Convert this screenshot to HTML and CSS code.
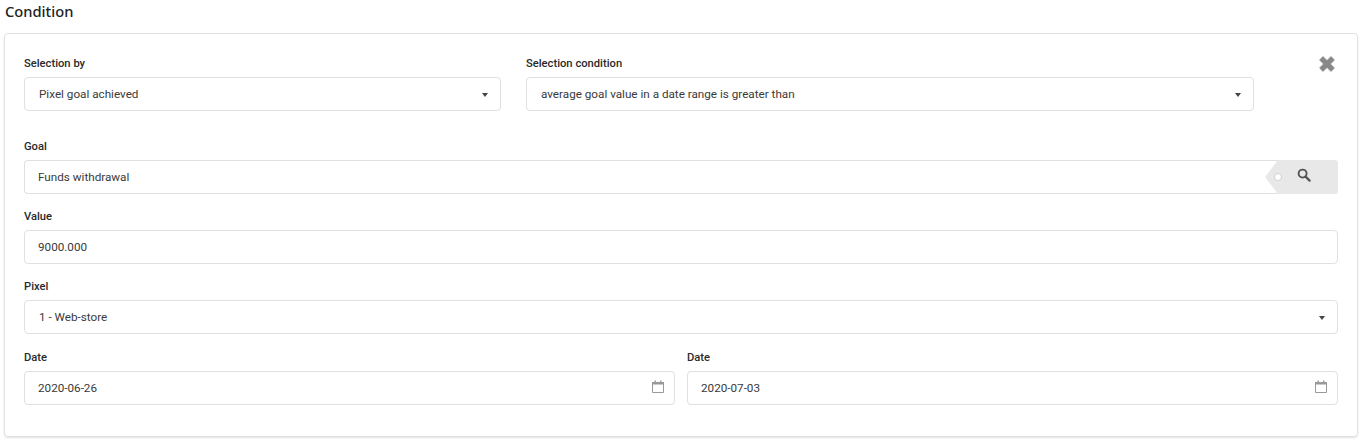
FILE: index.html
```html
<!DOCTYPE html>
<html lang="en">
<head>
<meta charset="utf-8">
<title>Condition</title>
<link rel="stylesheet" href="styles.css">
</head>
<body>
<h2 class="title">Condition</h2>
<section class="card">
  <div class="row-top">
    <div class="field col-by">
      <div class="label">Selection by</div>
      <div class="control select"><span>Pixel goal achieved</span><i class="caret"></i></div>
    </div>
    <div class="field col-cond">
      <div class="label">Selection condition</div>
      <div class="control select"><span>average goal value in a date range is greater than</span><i class="caret"></i></div>
    </div>
    <svg class="close" viewBox="0 0 16 16" width="16" height="16" aria-hidden="true"><path d="M4 0.6 8 4.6 12 0.6 15.4 4 11.4 8 15.4 12 12 15.4 8 11.4 4 15.4 0.6 12 4.6 8 0.6 4Z" fill="#888" stroke="#888" stroke-width="0.8" stroke-linejoin="round"/></svg>
  </div>
  <div class="field goal">
    <div class="label">Goal</div>
    <div class="control control-goal">
      <span>Funds withdrawal</span>
      <div class="tag">
        <i class="tag-hole"></i>
        <svg class="search" viewBox="0 0 14 14" width="14" height="14" aria-hidden="true"><circle cx="5.6" cy="5.6" r="4" fill="none" stroke="#555" stroke-width="1.9"/><path d="M8.6 8.6 12.6 12.6" stroke="#555" stroke-width="2.2" stroke-linecap="round"/></svg>
      </div>
    </div>
  </div>
  <div class="field value">
    <div class="label">Value</div>
    <div class="control"><span>9000.000</span></div>
  </div>
  <div class="field pixel">
    <div class="label">Pixel</div>
    <div class="control select"><span>1 - Web-store</span><i class="caret"></i></div>
  </div>
  <div class="row-dates">
    <div class="field">
      <div class="label">Date</div>
      <div class="control"><span>2020-06-26</span>
        <svg class="cal" viewBox="0 0 12 13" width="12" height="13" aria-hidden="true"><path d="M.5 2.500h11v10H.5z" fill="none" stroke="#999"/><path d="M0 2h12v2.600H0zM2.500 .5h1.400v2H2.500zM8.100 .5h1.400v2H8.100z" fill="#999"/></svg>
      </div>
    </div>
    <div class="field">
      <div class="label">Date</div>
      <div class="control"><span>2020-07-03</span>
        <svg class="cal" viewBox="0 0 12 13" width="12" height="13" aria-hidden="true"><path d="M.5 2.500h11v10H.5z" fill="none" stroke="#999"/><path d="M0 2h12v2.600H0zM2.500 .5h1.400v2H2.500zM8.100 .5h1.400v2H8.100z" fill="#999"/></svg>
      </div>
    </div>
  </div>
</section>
</body>
</html>
```
FILE: styles.css
```css
* { box-sizing: border-box; }
html, body { margin: 0; padding: 0; background: #fff; }
body {
  width: 1365px;
  height: 444px;
  overflow: hidden;
  font-family: Roboto, "Noto Sans", sans-serif;
  font-size: 12px;
  color: #3a3a3a;
}
.title {
  margin: 0;
  height: 33px;
  padding: 2px 0 0 5px;
  font-size: 14.700px;
  line-height: 18px;
  font-weight: 500;
  color: #222;
  font-family: "Noto Sans", sans-serif;
}
.card {
  width: 1354px;
  height: 404px;
  margin-left: 4px;
  padding: 19px 19px 0;
  border: 1px solid #e1e1e1;
  border-radius: 4px;
  box-shadow: 0 1px 2px rgba(0,0,0,.12);
}
.row-top { display: flex; gap: 25px; position: relative; }
.col-by { width: 477px; }
.col-cond { width: 728px; }
.close { position: absolute; top: 3px; right: 3px; }
.label {
  height: 24px;
  line-height: 22px;
  font-weight: 500;
  color: #2a2a2a;
  font-size: 11.200px;
}
.control {
  display: flex;
  align-items: center;
  justify-content: space-between;
  height: 34px;
  padding: 0 10px 1px 13px;
  border: 1px solid #e0e0e0;
  border-radius: 4px;
  background: #fff;
  font-size: 11.700px;
}
.select { padding-left: 14px; padding-right: 12px; }
.caret {
  width: 0;
  height: 0;
  border-left: 3.500px solid transparent;
  border-right: 3.500px solid transparent;
  border-top: 4px solid #444;
  margin-top: 2px;
}
.cal { margin-bottom: 2px; }
.goal { margin-top: 25px; }
.control-goal { padding-right: 0; position: relative; border-right: 0; }
.tag {
  position: absolute;
  top: -1px;
  right: 0;
  width: 60px;
  height: 34px;
  background: #e8e8e8;
  border-radius: 0 4px 4px 0;
}
.tag::before {
  content: "";
  position: absolute;
  left: -13px;
  top: 0;
  width: 0;
  height: 0;
  border-top: 17px solid transparent;
  border-bottom: 17px solid transparent;
  border-right: 13px solid #e8e8e8;
}
.tag-hole {
  position: absolute;
  left: -4px;
  top: 13px;
  width: 8px;
  height: 8px;
  border-radius: 50%;
  background: #fff;
  border: 1px solid #d0d0d0;
}
.search { position: absolute; left: 19px; top: 8px; }
.value { margin-top: 12px; }
.pixel { margin-top: 12px; }
.row-dates {
  display: grid;
  grid-template-columns: 651px 651px;
  gap: 12px;
  margin-top: 13px;
}
```
